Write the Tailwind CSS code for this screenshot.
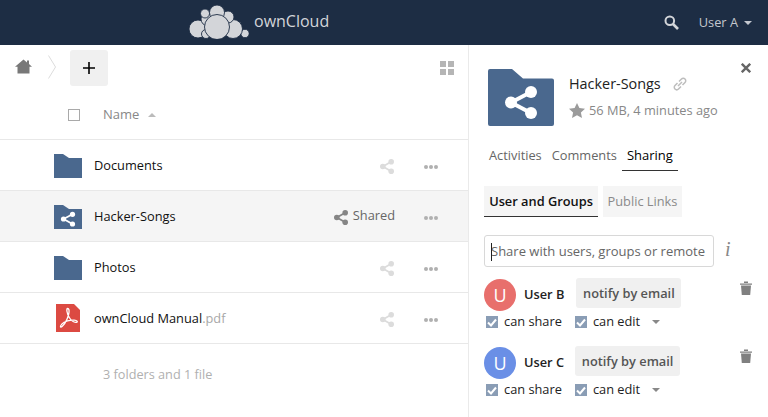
<!DOCTYPE html>
<html>
<head>
<meta charset="utf-8">
<script src="https://cdn.jsdelivr.net/npm/@tailwindcss/browser@4"></script>
</head>
<body class="w-[768px] h-[417px] overflow-hidden bg-white font-['Open_Sans',sans-serif] text-[12.8px] text-[#222]">
<header class="h-[45px] bg-[#1d2d44] flex items-center relative">
  <div class="w-[189px]"></div>
  <svg class="w-[60px] h-[34px] self-start mt-[5px]" viewBox="0 0 60 34">
    <g fill="#d3d5d9" stroke="#1d2d44" stroke-width="0.9">
      <circle cx="56" cy="28.500" r="4.200"/>
      <circle cx="44" cy="24" r="9.500"/>
      <circle cx="9" cy="24" r="9"/>
      <circle cx="19" cy="14" r="7"/>
      <circle cx="16" cy="8.500" r="4.500"/>
      <circle cx="17" cy="29" r="4.500"/>
      <circle cx="39" cy="12" r="6"/>
      <circle cx="28" cy="7.500" r="7.500"/>
      <circle cx="28" cy="22" r="12.500"/>
    </g>
  </svg>
  <span class="ml-[5px] mt-[-4px] text-[#d3d5d9] text-[16px] leading-none">ownCloud</span>
  <div class="flex-1"></div>
  <svg class="w-[15px] h-[15px] mr-[20px]" viewBox="0 0 15 15" fill="none" stroke="#d3d5d9"><circle cx="5.800" cy="5.800" r="4.300" stroke-width="2"/><path d="M9 9l5 5" stroke-width="2.600"/></svg>
  <span class="text-[#c4c8cf] text-[12.800px] mt-[1px]">User A</span>
  <span class="ml-[6px] mr-[16px] w-0 h-0 border-x-[4px] border-x-transparent border-t-[4px] border-t-[#c4c8cf]"></span>
</header>
<main class="flex h-[372px]">
  <section class="w-[469px] shrink-0 border-r border-[#eaeaea]">
    <div class="h-[50px] flex items-center">
      <svg class="ml-[15px] w-[17px] h-[15px] mt-[-8px]" viewBox="0 0 17 15"><path fill="#787878" d="M8.500 0.500L12 3.400V1.500h2v3.600l3 2.700h-2.500V14.500h-12V7.800H0Z"/></svg>
      <svg class="ml-[16px] w-[8px] h-[24px] mt-[-6px]" viewBox="0 0 8 24" fill="none" stroke="#dcdcdc"><path d="M0.500 0.500l7 11.500l-7 11.500"/></svg>
      <div class="ml-[14px] w-[38px] h-[36px] mt-[-4px] rounded-[3px] bg-[#f0f0f0] flex items-center justify-center">
        <svg class="w-[12px] h-[12px]" viewBox="0 0 12 12"><path fill="#000" d="M5.200 0h1.600v5.200H12v1.600H6.800V12H5.200V6.800H0V5.200h5.200z"/></svg>
      </div>
      <div class="flex-1"></div>
      <div class="mr-[14px] mt-[-4px] grid grid-cols-2 gap-[2px] w-[14px]">
        <span class="h-[6px] bg-[#b5b5b5]"></span><span class="h-[6px] bg-[#b5b5b5]"></span><span class="h-[6px] bg-[#b5b5b5]"></span><span class="h-[6px] bg-[#b5b5b5]"></span>
      </div>
    </div>
    <div class="h-[45px] flex items-center border-b border-[#e8e8e8] pb-[2px] pl-[68px]">
      <span class="w-[12px] h-[12px] border border-[#a9a9a9] mt-[-2px]"></span>
      <span class="ml-[23px] text-[13px] text-[#888] mt-[-3px]">Name</span>
      <span class="ml-[9px] mt-[-2px] w-0 h-0 border-x-[4px] border-x-transparent border-b-[4px] border-b-[#bbb]"></span>
    </div>

    <div class="h-[51px] flex items-center border-b border-[#e8e8e8]">
      <svg class="ml-[54px] w-[28px] h-[24px] mt-[1px]" viewBox="0 0 28 24"><path fill="#4a688e" d="M0 0h9l6 4h13v20H0z"/></svg>
      <span class="ml-[12px] mt-[2px] text-[#111]">Documents</span>
      <div class="flex-1"></div>
      <svg class="w-[14px] h-[15px] mr-[30px] mt-[3px]" viewBox="0 0 14 15" fill="#dcdcdc"><circle cx="2.800" cy="7.500" r="2.800"/><circle cx="11.200" cy="2.800" r="2.800"/><circle cx="11.200" cy="12.200" r="2.800"/><path d="M2.800 7.500L11.200 2.800M2.800 7.500L11.200 12.200" stroke="#dcdcdc" stroke-width="1.800"/></svg>
      <span class="mr-[30px] mt-[3px] flex gap-[1px]"><i class="w-[4px] h-[4px] rounded-full bg-[#b0b0b0]"></i><i class="w-[4px] h-[4px] rounded-full bg-[#b0b0b0]"></i><i class="w-[4px] h-[4px] rounded-full bg-[#b0b0b0]"></i></span>
    </div>

    <div class="h-[51px] flex items-center border-b border-[#e8e8e8] bg-[#f5f5f5]">
      <svg class="ml-[54px] w-[28px] h-[24px] mt-[1px]" viewBox="0 0 28 24"><path fill="#4a688e" d="M0 0h9l6 4h13v20H0z"/><g fill="#fff"><circle cx="9.500" cy="14" r="2.600"/><circle cx="18.500" cy="9.300" r="2.600"/><circle cx="18.500" cy="19" r="2.600"/><path d="M9.500 14L18.500 9.300M9.500 14L18.500 19" stroke="#fff" stroke-width="1.800"/></g></svg>
      <span class="ml-[12px] mt-[2px] text-[#111]">Hacker-Songs</span>
      <div class="flex-1"></div>
      <svg class="w-[14px] h-[15px] mr-[5px] mt-[2px]" viewBox="0 0 14 15" fill="#858585"><circle cx="2.800" cy="7.500" r="2.800"/><circle cx="11.200" cy="2.800" r="2.800"/><circle cx="11.200" cy="12.200" r="2.800"/><path d="M2.800 7.500L11.200 2.800M2.800 7.500L11.200 12.200" stroke="#858585" stroke-width="1.800"/></svg>
      <span class="mr-[29px] text-[#666]">Shared</span>
      <span class="mr-[30px] mt-[3px] flex gap-[1px]"><i class="w-[4px] h-[4px] rounded-full bg-[#b0b0b0]"></i><i class="w-[4px] h-[4px] rounded-full bg-[#b0b0b0]"></i><i class="w-[4px] h-[4px] rounded-full bg-[#b0b0b0]"></i></span>
    </div>

    <div class="h-[51px] flex items-center border-b border-[#e8e8e8]">
      <svg class="ml-[54px] w-[28px] h-[24px] mt-[1px]" viewBox="0 0 28 24"><path fill="#4a688e" d="M0 0h9l6 4h13v20H0z"/></svg>
      <span class="ml-[12px] mt-[2px] text-[#111]">Photos</span>
      <div class="flex-1"></div>
      <svg class="w-[14px] h-[15px] mr-[30px] mt-[3px]" viewBox="0 0 14 15" fill="#dcdcdc"><circle cx="2.800" cy="7.500" r="2.800"/><circle cx="11.200" cy="2.800" r="2.800"/><circle cx="11.200" cy="12.200" r="2.800"/><path d="M2.800 7.500L11.200 2.800M2.800 7.500L11.200 12.200" stroke="#dcdcdc" stroke-width="1.800"/></svg>
      <span class="mr-[30px] mt-[3px] flex gap-[1px]"><i class="w-[4px] h-[4px] rounded-full bg-[#b0b0b0]"></i><i class="w-[4px] h-[4px] rounded-full bg-[#b0b0b0]"></i><i class="w-[4px] h-[4px] rounded-full bg-[#b0b0b0]"></i></span>
    </div>

    <div class="h-[51px] flex items-center border-b border-[#e8e8e8]">
      <svg class="ml-[56px] w-[24px] h-[28px]" viewBox="0 0 24 28"><path fill="#dc4a42" d="M0 0h18l6 6v22H0z"/><path fill="none" stroke="#fff" stroke-width="1.300" d="M11.500 4.500c-1.200 0 -.8 5 1.800 9c1.800 3 4.500 5 7 4.800c2-.3 .8-2-2-2.200c-4-.3-10 1-12.500 4c-2.200 2.600-1.500 3.800 .3 2.400c3.500-2.700 7.500-12 6.900-16.500c-.2-1-.7-1.500-1.500-1.500z"/></svg>
      <span class="ml-[14px] mt-[1px] text-[#111]">ownCloud Manual<span class="text-[#a8a8a8]">.pdf</span></span>
      <div class="flex-1"></div>
      <svg class="w-[14px] h-[15px] mr-[30px] mt-[3px]" viewBox="0 0 14 15" fill="#dcdcdc"><circle cx="2.800" cy="7.500" r="2.800"/><circle cx="11.200" cy="2.800" r="2.800"/><circle cx="11.200" cy="12.200" r="2.800"/><path d="M2.800 7.500L11.200 2.800M2.800 7.500L11.200 12.200" stroke="#dcdcdc" stroke-width="1.800"/></svg>
      <span class="mr-[30px] mt-[3px] flex gap-[1px]"><i class="w-[4px] h-[4px] rounded-full bg-[#b0b0b0]"></i><i class="w-[4px] h-[4px] rounded-full bg-[#b0b0b0]"></i><i class="w-[4px] h-[4px] rounded-full bg-[#b0b0b0]"></i></span>
    </div>
    <p class="pl-[103px] pt-[21px] text-[12.700px] text-[#b0b0b0]">3 folders and 1 file</p>
  </section>

  <aside class="flex-1 relative pl-[15px]">
    <svg class="absolute right-[17px] top-[18px] w-[10px] h-[10px]" viewBox="0 0 10 10" stroke="#666" stroke-width="2.400"><path d="M0.800 0.800l8.400 8.400M9.200 0.800l-8.400 8.400"/></svg>
    <div class="flex pt-[24px] pl-[4px] h-[95px]">
      <svg class="w-[66px] h-[57px]" viewBox="0 0 66 57"><path fill="#4a688e" d="M2 0h22l11 9.500h29a2 2 0 0 1 2 2V55a2 2 0 0 1-2 2H2a2 2 0 0 1-2-2V2a2 2 0 0 1 2-2z"/><g fill="#fff"><circle cx="23" cy="33.500" r="6"/><circle cx="43" cy="23" r="6"/><circle cx="43" cy="44" r="6"/><path d="M23 33.500L43 23M23 33.500L43 44" stroke="#fff" stroke-width="4"/></g></svg>
      <div class="ml-[15px]">
        <div class="flex items-center h-[22px] mt-[4px]">
          <span class="text-[14.400px] text-[#222]">Hacker-Songs</span>
          <svg class="ml-[12px] w-[14px] h-[14px]" viewBox="0 0 14 14" fill="none" stroke="#bdbdbd" stroke-width="1.500"><path d="M6 4.500l2.500-2.500a2.300 2.300 0 0 1 3.500 3.500L9.500 8M8 9.500L5.500 12A2.300 2.300 0 0 1 2 8.500L4.500 6M5 9l4-4"/></svg>
        </div>
        <div class="flex items-center mt-[6px]">
          <svg class="w-[16px] h-[15px]" viewBox="0 0 16 15"><path fill="#9b9b9b" d="M8 0l2.400 5 5.600.700-4.100 3.800 1.100 5.500L8 12.300 3 15l1.100-5.500L0 5.700 5.600 5z"/></svg>
          <span class="ml-[4px] text-[12.800px] text-[#888]">56 MB, 4 minutes ago</span>
        </div>
      </div>
    </div>
    <nav class="flex h-[31px] items-start pl-[5px] text-[12.800px]">
      <span class="pt-[6px] text-[#666]">Activities</span>
      <span class="pt-[6px] ml-[10px] text-[#666]">Comments</span>
      <span class="ml-[5px] px-[5px] pt-[6px] h-[31px] border-b border-[#333] text-[#000] text-[13px] font-medium">Sharing</span>
    </nav>
    <div class="flex mt-[15px] h-[31px] text-[12.800px]">
      <span class="w-[114px] bg-[#f5f5f5] border-b border-[#333] pt-[1px] text-[#111] font-semibold flex items-center justify-center">User and Groups</span>
      <span class="ml-[5px] w-[79px] bg-[#f5f5f5] pt-[1px] text-[#8a8a8a] flex items-center justify-center">Public Links</span>
    </div>
    <div class="flex items-center mt-[18px]">
      <div class="w-[230px] h-[32px] border border-[#d8d8d8] rounded-[3px] text-[13px] text-[#666] flex items-center pl-[6px] pt-[2px] relative overflow-hidden whitespace-nowrap">
        <span class="absolute left-[6px] top-[7px] w-px h-[18px] bg-[#222]"></span>Share with users, groups or remote
      </div>
      <span class="ml-[11px] mt-[-4px] text-[#888] font-['Liberation_Serif',serif] italic text-[20px] leading-none">i</span>
    </div>

    <div class="flex items-center mt-[11px] h-[30px] relative">
      <span class="self-start mt-[1px] w-[32px] h-[32px] rounded-full bg-[#e86f6c] text-white text-[18px] flex items-center justify-center">U</span>
      <span class="ml-[8px] mt-[3px] font-semibold text-[12.800px] text-[#222]">User B</span>
      <span class="ml-[12px] w-[105px] h-[30px] pt-[1px] rounded-[3px] bg-[#f0f0f0] text-[#555] font-semibold text-[12.800px] flex items-center justify-center">notify by email</span>
      <svg class="absolute left-[256px] top-[3px] w-[12px] h-[14px]" viewBox="0 0 12 14" fill="#808080"><path d="M0 2.400h12V3.800H0zM4 .5h4v1.500H4z"/><path d="M1 4.600h10L10.200 14H1.800z"/></svg>
    </div>
    <div class="flex items-center h-[20px] mt-[4px] pl-[2px] text-[#222]">
      <span class="w-[12px] h-[12px] bg-[#8a9db5] flex items-center justify-center"><svg class="w-[10px] h-[9px]" viewBox="0 0 10 9" fill="none" stroke="#fff" stroke-width="2"><path d="M1 4.500l3 3 5-6"/></svg></span>
      <span class="ml-[6px]">can share</span>
      <span class="ml-[13px] w-[12px] h-[12px] bg-[#8a9db5] flex items-center justify-center"><svg class="w-[10px] h-[9px]" viewBox="0 0 10 9" fill="none" stroke="#fff" stroke-width="2"><path d="M1 4.500l3 3 5-6"/></svg></span>
      <span class="ml-[6px]">can edit</span>
      <span class="ml-[12px] w-0 h-0 border-x-[4px] border-x-transparent border-t-[4px] border-t-[#888]"></span>
    </div>

    <div class="flex items-center mt-[14px] h-[30px] relative">
      <span class="self-start mt-[1px] w-[32px] h-[32px] rounded-full bg-[#6a8fe6] text-white text-[18px] flex items-center justify-center">U</span>
      <span class="ml-[8px] mt-[3px] font-semibold text-[12.800px] text-[#222]">User C</span>
      <span class="ml-[11px] w-[105px] h-[30px] pt-[1px] rounded-[3px] bg-[#f0f0f0] text-[#555] font-semibold text-[12.800px] flex items-center justify-center">notify by email</span>
      <svg class="absolute left-[256px] top-[3px] w-[12px] h-[14px]" viewBox="0 0 12 14" fill="#808080"><path d="M0 2.400h12V3.800H0zM4 .5h4v1.500H4z"/><path d="M1 4.600h10L10.200 14H1.800z"/></svg>
    </div>
    <div class="flex items-center h-[20px] mt-[4px] pl-[2px] text-[#222]">
      <span class="w-[12px] h-[12px] bg-[#8a9db5] flex items-center justify-center"><svg class="w-[10px] h-[9px]" viewBox="0 0 10 9" fill="none" stroke="#fff" stroke-width="2"><path d="M1 4.500l3 3 5-6"/></svg></span>
      <span class="ml-[6px]">can share</span>
      <span class="ml-[13px] w-[12px] h-[12px] bg-[#8a9db5] flex items-center justify-center"><svg class="w-[10px] h-[9px]" viewBox="0 0 10 9" fill="none" stroke="#fff" stroke-width="2"><path d="M1 4.500l3 3 5-6"/></svg></span>
      <span class="ml-[6px]">can edit</span>
      <span class="ml-[12px] w-0 h-0 border-x-[4px] border-x-transparent border-t-[4px] border-t-[#888]"></span>
    </div>
  </aside>
</main>
</body>
</html>
